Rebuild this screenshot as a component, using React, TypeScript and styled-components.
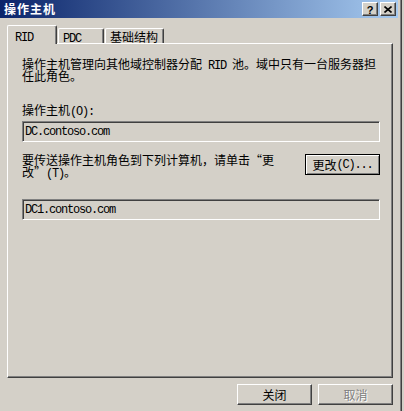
import styled, { createGlobalStyle } from "styled-components"

const GlobalStyle = createGlobalStyle`
  html, body {
    margin: 0;
    padding: 0;
    background: #d4d0c8;
  }
  body {
    font-family: "Noto Sans CJK SC", sans-serif;
    font-size: 12px;
    line-height: 12px;
    color: #000;
  }
`

function App() {
  return (
    <>
      <GlobalStyle />
      <Window>
        <TitleBar>
          <Title>操作主机</Title>
          <CaptionButtons>
            <CaptionButton>
              <HelpMark>?</HelpMark>
            </CaptionButton>
            <CaptionButton>
              <svg width="8" height="7" viewBox="0 0 8 7">
                <path d="M0.5 0.5 L7.5 6.5 M7.5 0.5 L0.5 6.5" stroke="#000" strokeWidth="1.6" />
              </svg>
            </CaptionButton>
          </CaptionButtons>
        </TitleBar>

        <Body>
          <TabRow>
            <Tab $active $w={50}>
              <Latin>RID</Latin>
            </Tab>
            <Tab $w={46}>
              <Latin>PDC</Latin>
            </Tab>
            <Tab $w={59}>基础结构</Tab>
          </TabRow>

          <Panel>
            <Text>
              <Line>
                操作主机管理向其他域控制器分配<Latin> RID </Latin>池。域中只有一台服务器担
              </Line>
              <Line>任此角色。</Line>
            </Text>

            <Label>
              操作主机<Latin>(O):</Latin>
            </Label>
            <Field>DC.contoso.com</Field>

            <TransferRow>
              <TransferText>
                <Line>要传送操作主机角色到下列计算机，请单击“更</Line>
                <Line>
                  改”<Latin>(T)</Latin>。
                </Line>
              </TransferText>
              <Button $default>
                更改<Latin>(C)...</Latin>
              </Button>
            </TransferRow>

            <Field $gap={21}>DC1.contoso.com</Field>
          </Panel>

          <Footer>
            <Button>关闭</Button>
            <Button disabled>取消</Button>
          </Footer>
        </Body>
      </Window>
    </>
  )
}

export default App

const Window = styled.div`
  box-sizing: border-box;
  width: 402px;
  height: 411px;
  padding-right: 3px;
  border-right: 1px solid #404040;
  box-shadow: inset -1px 0 0 #808080;
  background: #d4d0c8;
  display: flex;
  flex-direction: column;
`

const TitleBar = styled.div`
  height: 18px;
  display: flex;
  align-items: center;
  padding: 0 2px 0 4px;
  background: linear-gradient(to right, #0a246a, #a6caf0);
`

const Title = styled.span`
  color: #fff;
  font-weight: bold;
  letter-spacing: 1px;
`

const CaptionButtons = styled.div`
  margin-left: auto;
  display: flex;
  gap: 2px;
`

const CaptionButton = styled.div`
  box-sizing: border-box;
  width: 16px;
  height: 14px;
  display: flex;
  align-items: center;
  justify-content: center;
  background: #d4d0c8;
  border: 1px solid #fff;
  border-right-color: #404040;
  border-bottom-color: #404040;
  box-shadow: inset -1px -1px 0 #808080;
`

const HelpMark = styled.span`
  font-family: "Liberation Sans", sans-serif;
  font-weight: bold;
  font-size: 11px;
  line-height: 10px;
  margin-top: 1px;
`

const Body = styled.div`
  flex: 1;
  display: flex;
  flex-direction: column;
  padding: 7px 5px 0 7px;
`

const TabRow = styled.div`
  height: 18px;
  display: flex;
  align-items: flex-end;
  gap: 1px;
  position: relative;
  z-index: 1;
`

const Tab = styled.div<{ $active?: boolean; $w: number }>`
  box-sizing: border-box;
  width: ${(p) => p.$w}px;
  height: ${(p) => (p.$active ? 19 : 15)}px;
  margin-bottom: ${(p) => (p.$active ? -1 : 0)}px;
  padding: ${(p) => (p.$active ? "4px 0 0 7px" : "2px 0 0 4px")};
  background: #d4d0c8;
  border: 1px solid #fff;
  border-bottom: none;
  border-right-color: #404040;
  border-radius: 2px 2px 0 0;
  box-shadow: inset -1px 0 0 #808080;
  white-space: nowrap;
`

const Panel = styled.div`
  box-sizing: border-box;
  height: 335px;
  display: flex;
  flex-direction: column;
  padding: 14px 12px 0 14px;
  border: 1px solid #fff;
  border-right-color: #404040;
  border-bottom-color: #404040;
  box-shadow: inset -1px -1px 0 #808080;
`

const Latin = styled.span`
  font-family: "Liberation Mono", monospace;
  letter-spacing: -1.2px;
  white-space: pre;
`

const Text = styled.div`
  display: flex;
  flex-direction: column;
`

const Line = styled.div`
  height: 12px;
  white-space: nowrap;
`

const Label = styled.div`
  margin-top: 22px;
`

const Field = styled.div<{ $gap?: number }>`
  box-sizing: border-box;
  height: 21px;
  margin-top: ${(p) => p.$gap ?? 3}px;
  display: flex;
  align-items: center;
  padding: 0 2px;
  border: 1px solid #808080;
  border-right-color: #fff;
  border-bottom-color: #fff;
  box-shadow: inset 1px 1px 0 #404040;
  font-family: "Liberation Mono", monospace;
  letter-spacing: -1.2px;
`

const TransferRow = styled.div`
  margin-top: 12px;
  display: flex;
  align-items: flex-start;
  justify-content: space-between;
`

const TransferText = styled(Text)`
  font-feature-settings: "fwid";
`

const Button = styled.button<{ $default?: boolean }>`
  box-sizing: border-box;
  width: 75px;
  height: 21px;
  padding: 0;
  display: flex;
  align-items: center;
  justify-content: center;
  font-family: "Noto Sans CJK SC", sans-serif;
  font-size: 12px;
  line-height: 12px;
  color: #000;
  background: #d4d0c8;
  border: 1px solid ${(p) => (p.$default ? "#000" : "#fff")};
  border-right-color: ${(p) => (p.$default ? "#000" : "#404040")};
  border-bottom-color: ${(p) => (p.$default ? "#000" : "#404040")};
  box-shadow: ${(p) =>
    p.$default
      ? "inset 1px 1px 0 #fff, inset -1px -1px 0 #808080"
      : "inset -1px -1px 0 #808080"};

  &:disabled {
    color: #808080;
    text-shadow: 1px 1px 0 #fff;
  }
`

const Footer = styled.div`
  margin-top: 6px;
  display: flex;
  justify-content: flex-end;
  gap: 6px;
`
